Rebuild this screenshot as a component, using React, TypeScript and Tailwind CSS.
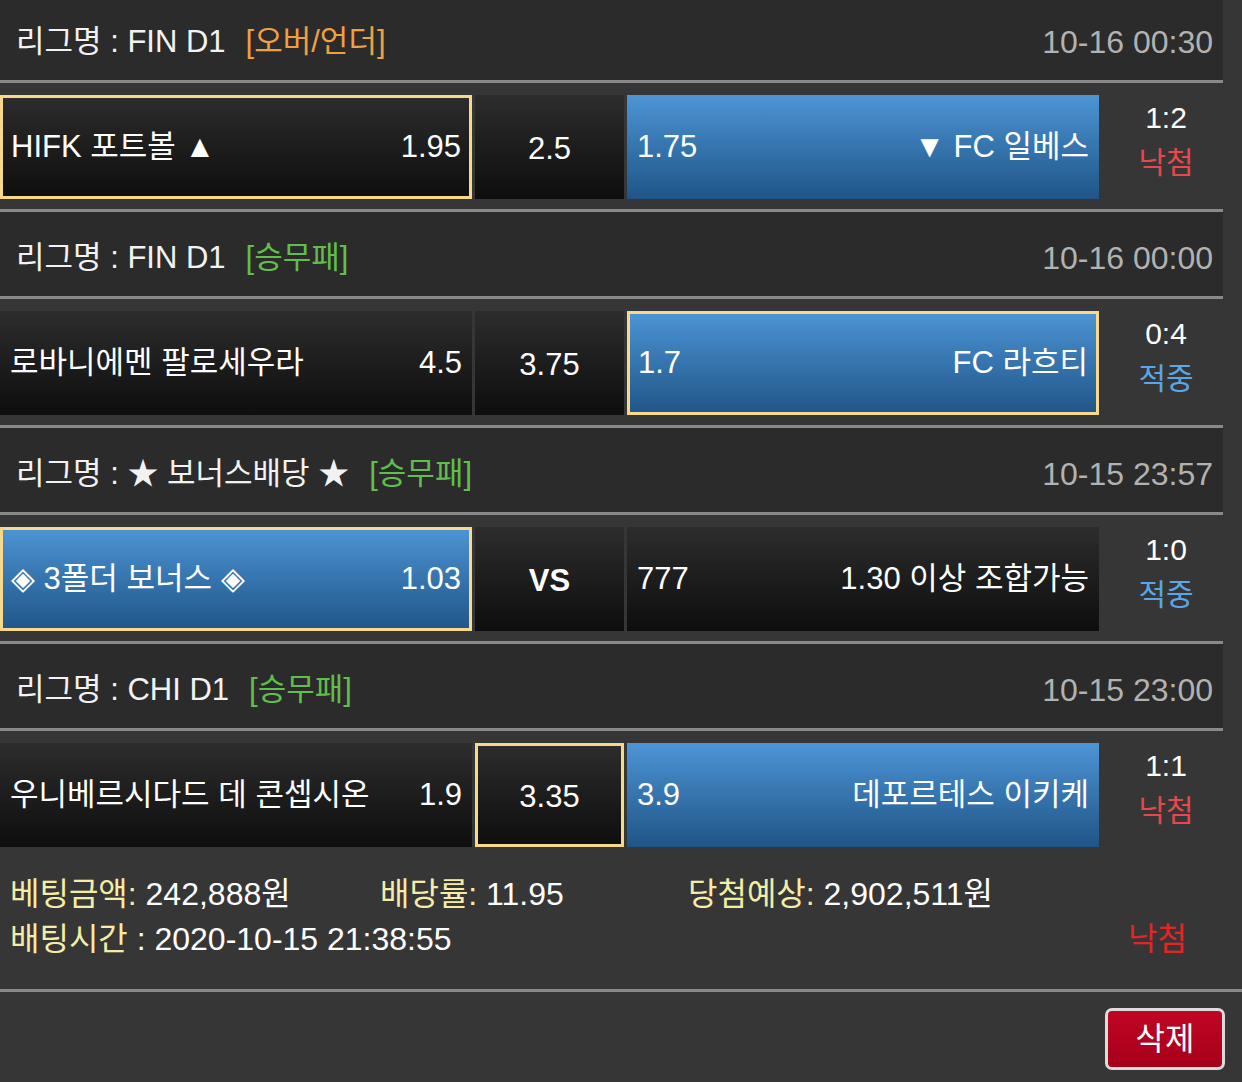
import React from "react";

type Cell = { text: string; odds?: string; blue?: boolean; picked?: boolean };

type Game = {
  league: string;
  tag: string;
  tagColor: string;
  time: string;
  home: Cell;
  mid: Cell;
  away: Cell;
  score: string;
  result: "낙첨" | "적중";
};

const games: Game[] = [
  {
    league: "FIN D1",
    tag: "[오버/언더]",
    tagColor: "text-[#f0a040]",
    time: "10-16 00:30",
    home: { text: "HIFK 포트볼 ▲", odds: "1.95", picked: true },
    mid: { text: "2.5" },
    away: { text: "▼ FC 일베스", odds: "1.75", blue: true },
    score: "1:2",
    result: "낙첨",
  },
  {
    league: "FIN D1",
    tag: "[승무패]",
    tagColor: "text-[#5fbf4a]",
    time: "10-16 00:00",
    home: { text: "로바니에멘 팔로세우라", odds: "4.5" },
    mid: { text: "3.75" },
    away: { text: "FC 라흐티", odds: "1.7", blue: true, picked: true },
    score: "0:4",
    result: "적중",
  },
  {
    league: "★ 보너스배당 ★",
    tag: "[승무패]",
    tagColor: "text-[#5fbf4a]",
    time: "10-15 23:57",
    home: { text: "◈ 3폴더 보너스 ◈", odds: "1.03", blue: true, picked: true },
    mid: { text: "VS" },
    away: { text: "1.30 이상 조합가능", odds: "777" },
    score: "1:0",
    result: "적중",
  },
  {
    league: "CHI D1",
    tag: "[승무패]",
    tagColor: "text-[#5fbf4a]",
    time: "10-15 23:00",
    home: { text: "우니베르시다드 데 콘셉시온", odds: "1.9" },
    mid: { text: "3.35", picked: true },
    away: { text: "데포르테스 이키케", odds: "3.9", blue: true },
    score: "1:1",
    result: "낙첨",
  },
];

// picked cells get the yellow frame, blue cells the highlighted gradient
function cellBg(c: Cell) {
  const bg = c.blue
    ? "bg-gradient-to-b from-[#4d95d6] to-[#1f5587]"
    : "bg-gradient-to-b from-[#2d2d2d] to-[#0e0e0e]";
  const border = c.picked
    ? "border-[3px] border-[#f7d88c] px-[8px]"
    : "border-0 px-[10px]";
  return `bg-origin-border ${bg} ${border}`;
}

function Header({ g }: { g: Game }) {
  return (
    <div className="w-[1223px] h-[87px] pt-2 bg-[#2b2b2b] border-b-[3px] border-[#898989] flex items-center justify-between pl-[16px] pr-[10px]">
      <div className="flex items-center text-[31px] text-[#f2f2f2]">
        <span>리그명 : {g.league}</span>
        <span className={`ml-[20px] ${g.tagColor}`}>{g.tag}</span>
      </div>
      <span className="text-[32px] text-[#b2b2b2]">{g.time}</span>
    </div>
  );
}

function MatchRow({ g, last }: { g: Game; last: boolean }) {
  return (
    <div className={`w-[1223px] pt-[12px] ${last ? "h-[126px]" : "h-[129px] border-b-[3px] border-[#898989]"}`}>
      <div className="flex h-[104px] text-[31px] text-white">
        <div className={`w-[472px] flex items-center justify-between ${cellBg(g.home)}`}>
          <span>{g.home.text}</span>
          <span>{g.home.odds}</span>
        </div>
        <div className={`ml-[3px] w-[149px] flex items-center justify-center pt-[4px] ${cellBg(g.mid)} ${g.mid.text === "VS" ? "font-bold" : ""}`}>
          {g.mid.text}
        </div>
        <div className={`ml-[3px] w-[472px] flex items-center justify-between ${cellBg(g.away)}`}>
          <span>{g.away.odds}</span>
          <span>{g.away.text}</span>
        </div>
        <div className="flex-1 flex flex-col items-center justify-center pl-[10px] text-[30px] leading-[45px] -mt-[15px]">
          <span className="text-white">{g.score}</span>
          <span className={g.result === "낙첨" ? "text-[#e5484d]" : "text-[#5ba7e6]"}>{g.result}</span>
        </div>
      </div>
    </div>
  );
}

export default function App() {
  return (
    <div className="w-[1242px] h-[1082px] overflow-hidden bg-[#363636] [font-family:'Liberation_Sans','Noto_Sans_CJK_KR',sans-serif]">
      <div className="-mt-1">
        {games.map((g, i) => (
          <div key={i}>
            <Header g={g} />
            <MatchRow g={g} last={i === games.length - 1} />
          </div>
        ))}
      </div>

      {/* Summary */}
      <div className="h-[135px] pt-[15px] border-b-[3px] border-[#898989] text-[32px] leading-[45px] text-white">
        <div className="flex pl-[10px]">
          <div className="w-[370px]">
            <span className="text-[#f5eca6]">베팅금액:</span> 242,888원
          </div>
          <div className="w-[308px]">
            <span className="text-[#f5eca6]">배당률:</span> 11.95
          </div>
          <div>
            <span className="text-[#f5eca6]">당첨예상:</span> 2,902,511원
          </div>
        </div>
        <div className="flex justify-between pl-[10px] pr-[55px]">
          <div>
            <span className="text-[#f5eca6]">배팅시간</span> : 2020-10-15 21:38:55
          </div>
          <span className="text-[#e42525]">낙첨</span>
        </div>
      </div>

      <div className="flex justify-end pt-[16px] pr-[17px]">
        <button className="w-[120px] h-[62px] rounded-[7px] border-[3px] border-[#dcdcdc] bg-gradient-to-b from-[#c00622] to-[#a6001b] text-white text-[32px] flex items-center justify-center">
          삭제
        </button>
      </div>
    </div>
  );
}
